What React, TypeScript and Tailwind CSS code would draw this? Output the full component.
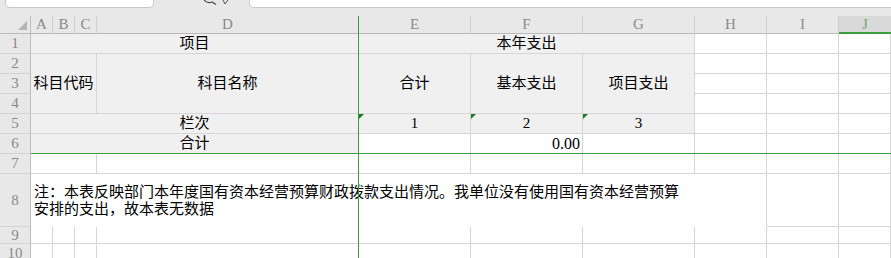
import React from "react";

const font = "font-['Liberation_Serif','Noto_Sans_CJK_SC',serif]";

interface IC {
    className?: string;
    children?: React.ReactNode;
}

// ordinary worksheet cell
const Cell = ({ className = "", children }: IC) => (
    <div className={`relative flex items-center overflow-hidden whitespace-nowrap border-r border-b border-[#d6d6d6] text-[15px] text-black ${className}`}>
        {children}
    </div>
);

const RowNum = ({ n }: { n: number }) => (
    <div className="col-start-1 flex items-center justify-center border-r border-b border-r-[#bdbdbd] border-b-[#d3d3d3] bg-[#e8e8e8] text-[15px] text-[#8a8a8a]">
        {n}
    </div>
);

const Mark = () => (
    <span className="absolute left-0 top-0 h-0 w-0 border-t-[5px] border-r-[5px] border-t-[#1c7c1c] border-r-transparent" />
);

const letters = ["A", "B", "C", "D", "E", "F", "G", "H", "I"];

const App = () => {
    return (
        <div className={`relative h-[258px] w-[891px] overflow-hidden bg-white ${font}`}>
            {/* formula bar remains */}
            <div className="flex h-[16px] items-start bg-[#e8e8e8]">
                <div className="ml-[5px] h-[8px] w-[149px] rounded-b-[5px] border border-t-0 border-[#c8c8c8] bg-white" />
                <svg className="ml-[49px]" width="28" height="5" viewBox="0 0 28 5">
                    <path d="M1 0 Q4 4 9 2 L13 4.5" fill="none" stroke="#444" strokeWidth="1.2" />
                    <path d="M20 0 L22 4 M25 0 L22 4" fill="none" stroke="#555" strokeWidth="1" />
                </svg>
                <div className="ml-[18px] h-[8px] flex-1 rounded-bl-[5px] border border-t-0 border-r-0 border-[#c8c8c8] bg-white" />
            </div>

            <div className="grid grid-cols-[31px_22px_22px_22px_262px_112px_112px_112px_72px_72px_1fr] grid-rows-[18px_20px_20px_20px_20px_20px_20px_20px_53px_17px_20px]">
                {/* column headers */}
                <div className="relative border-r border-b border-r-[#bdbdbd] border-b-[#bababa] bg-[#e8e8e8]">
                    <span className="absolute left-[18px] top-[5px] h-0 w-0 border-b-[9px] border-l-[9px] border-b-[#b4b4b4] border-l-transparent" />
                </div>
                {letters.map((l) => (
                    <div
                        key={l}
                        className="flex items-center justify-center border-r border-b border-r-[#d0d0d0] border-b-[#bababa] bg-[#e8e8e8] text-[15px] text-[#8a8a8a]"
                    >
                        {l}
                    </div>
                ))}
                <div className="flex items-center justify-center border-b-2 border-[#3d9c3d] bg-[#d9d9d9] text-[15px] text-[#6fa86f]">
                    J
                </div>

                {/* row 1 */}
                <RowNum n={1} />
                <Cell className="col-span-4 justify-center bg-[#f0f0f0]">项目</Cell>
                <Cell className="col-span-3 justify-center bg-[#f0f0f0]">本年支出</Cell>
                <Cell />
                <Cell />
                <Cell />

                {/* rows 2-4 */}
                <RowNum n={2} />
                <Cell className="col-span-3 row-span-3 justify-center bg-[#f0f0f0]">科目代码</Cell>
                <Cell className="row-span-3 justify-center bg-[#f0f0f0]">科目名称</Cell>
                <Cell className="row-span-3 justify-center bg-[#f0f0f0]">合计</Cell>
                <Cell className="row-span-3 justify-center bg-[#f0f0f0]">基本支出</Cell>
                <Cell className="row-span-3 justify-center bg-[#f0f0f0]">项目支出</Cell>
                <Cell />
                <Cell />
                <Cell />
                <RowNum n={3} />
                <Cell className="col-start-9" />
                <Cell />
                <Cell />
                <RowNum n={4} />
                <Cell className="col-start-9" />
                <Cell />
                <Cell />

                {/* row 5 */}
                <RowNum n={5} />
                <Cell className="col-span-4 justify-center bg-[#f0f0f0]">栏次</Cell>
                <Cell className="justify-center bg-[#f0f0f0]">
                    <Mark />1
                </Cell>
                <Cell className="justify-center bg-[#f0f0f0]">
                    <Mark />2
                </Cell>
                <Cell className="justify-center bg-[#f0f0f0]">
                    <Mark />3
                </Cell>
                <Cell />
                <Cell />
                <Cell />

                {/* row 6 */}
                <RowNum n={6} />
                <Cell className="col-span-4 justify-center bg-[#f0f0f0]">合计</Cell>
                <Cell />
                <Cell className="justify-end pr-[2px] text-[16px]">0.00</Cell>
                <Cell />
                <Cell />
                <Cell />
                <Cell />

                {/* row 7 */}
                <RowNum n={7} />
                <Cell className="col-span-3" />
                <Cell />
                <Cell />
                <Cell />
                <Cell />
                <Cell />
                <Cell />
                <Cell />

                {/* row 8 */}
                <RowNum n={8} />
                <Cell className="col-span-8 border-b-white pl-[3px] leading-[17px]">
                    <span className="pt-[2px]">
                        注：本表反映部门本年度国有资本经营预算财政拨款支出情况。我单位没有使用国有资本经营预算
                        <br />
                        安排的支出，故本表无数据
                    </span>
                </Cell>
                <Cell />
                <Cell />

                {/* rows 9-10 */}
                <RowNum n={9} />
                {letters.map((l) => (
                    <Cell key={"r9" + l} />
                ))}
                <Cell />
                <RowNum n={10} />
                {letters.map((l) => (
                    <Cell key={"r10" + l} />
                ))}
                <Cell />
            </div>

            {/* frozen pane lines */}
            <div className="absolute left-[358px] top-[16px] bottom-0 w-px bg-[#3d9c3d]" />
            <div className="absolute left-[31px] right-0 top-[153px] h-px bg-[#3d9c3d]" />
        </div>
    );
};

export default App;
